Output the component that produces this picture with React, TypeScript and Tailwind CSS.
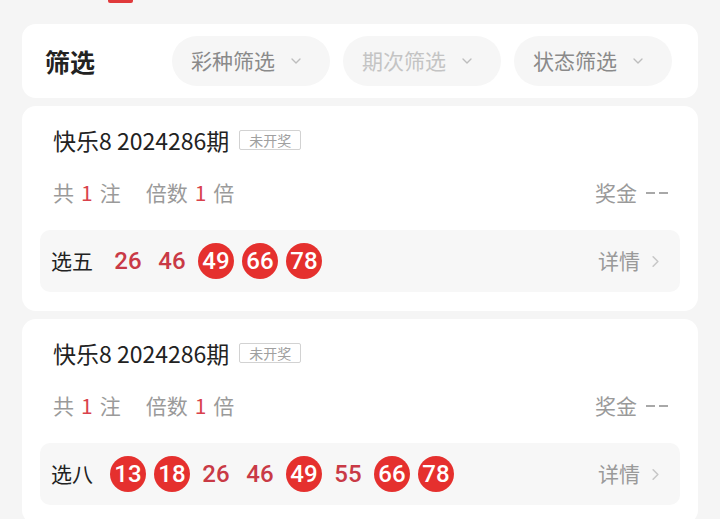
import { FiChevronDown, FiChevronRight } from "react-icons/fi";

type Ticket = {
    title: string;
    play: string;
    numbers: { n: string; hit: boolean }[];
};

const tickets: Ticket[] = [
    {
        title: "快乐8 2024286期",
        play: "选五",
        numbers: [
            { n: "26", hit: false },
            { n: "46", hit: false },
            { n: "49", hit: true },
            { n: "66", hit: true },
            { n: "78", hit: true },
        ],
    },
    {
        title: "快乐8 2024286期",
        play: "选八",
        numbers: [
            { n: "13", hit: true },
            { n: "18", hit: true },
            { n: "26", hit: false },
            { n: "46", hit: false },
            { n: "49", hit: true },
            { n: "55", hit: false },
            { n: "66", hit: true },
            { n: "78", hit: true },
        ],
    },
];

function FilterChip({ label, muted }: { label: string; muted?: boolean }) {
    return (
        <div className="w-[158px] h-[50px] rounded-full bg-[#f6f6f6] flex items-center pl-[19px] gap-[13px]">
            <span className={`text-[21px] ${muted ? "text-[#c4c4c4]" : "text-[#8a8a8a]"}`}>{label}</span>
            <FiChevronDown className="w-[16px] h-[16px] text-[#bdbdbd]" />
        </div>
    );
}

function TicketCard({ ticket }: { ticket: Ticket }) {
    return (
        <div className="bg-white rounded-[14px] px-[18px] pt-[22px] pb-[19px]">
            <div className="flex items-center pl-[13px] h-[24px]">
                <span className="text-[23px] text-[#222] leading-none">{ticket.title}</span>
                <span className="ml-[10px] h-[20px] px-[9px] border border-[#d2d2d2] rounded-[2px] text-[14px] text-[#a0a0a0] flex items-center leading-none">未开奖</span>
            </div>

            <div className="flex items-center justify-between pl-[13px] pr-[12px] mt-[28px] h-[26px] text-[21px] text-[#9a9a9a]">
                <div className="flex items-center">
                    <span>共</span>
                    <span className="mx-[7px] text-[#d9424c]">1</span>
                    <span>注</span>
                    <span className="ml-[25px]">倍数</span>
                    <span className="mx-[7px] text-[#d9424c]">1</span>
                    <span>倍</span>
                </div>
                <span className="flex items-center">
                    奖金
                    <span className="ml-[9px] flex gap-[4px]">
                        <span className="w-[9px] h-[1.5px] bg-[#a8a8a8]" />
                        <span className="w-[9px] h-[1.5px] bg-[#a8a8a8]" />
                    </span>
                </span>
            </div>

            <div className="mt-[24px] h-[62px] rounded-[10px] bg-[#f7f7f7] flex items-center pl-[11px] pr-[15px]">
                <span className="text-[21px] text-[#222] w-[42px]">{ticket.play}</span>
                <div className="ml-[17px] flex items-center gap-[8px]">
                    {ticket.numbers.map((x, i) =>
                        x.hit ? (
                            <span
                                key={i}
                                className="w-[36px] h-[36px] rounded-full bg-[#e5302e] text-white flex items-center justify-center text-[24px] font-medium"
                                style={{ fontFamily: "Roboto, sans-serif" }}>
                                {x.n}
                            </span>
                        ) : (
                            <span
                                key={i}
                                className="w-[36px] h-[36px] text-[#c93a46] flex items-center justify-center text-[24px] font-medium"
                                style={{ fontFamily: "Roboto, sans-serif" }}>
                                {x.n}
                            </span>
                        )
                    )}
                </div>
                <div className="ml-auto flex items-center gap-[6px] text-[21px] text-[#9a9a9a]">
                    <span>详情</span>
                    <FiChevronRight className="w-[19px] h-[19px] text-[#c8c8c8]" />
                </div>
            </div>
        </div>
    );
}

export default function App() {
    return (
        <div
            className="min-h-screen bg-[#f5f5f5] px-[22px] pb-[20px]"
            style={{ fontFamily: '"Noto Sans CJK SC", "Noto Sans", sans-serif' }}>
            <div className="h-[24px]">
                <div className="ml-[86px] w-[25px] h-[3px] bg-[#e0393b] rounded-b-[2px]" />
            </div>

            <div className="bg-white rounded-[14px] h-[74px] flex items-center pl-[23px] pr-[26px]">
                <h1 className="text-[25px] font-bold text-[#222] leading-none">筛选</h1>
                <div className="ml-auto flex items-center gap-[13px]">
                    <FilterChip label="彩种筛选" />
                    <FilterChip label="期次筛选" muted />
                    <FilterChip label="状态筛选" />
                </div>
            </div>

            <div className="mt-[8px] flex flex-col gap-[8px]">
                {tickets.map((t, i) => (
                    <TicketCard key={i} ticket={t} />
                ))}
            </div>
        </div>
    );
}
